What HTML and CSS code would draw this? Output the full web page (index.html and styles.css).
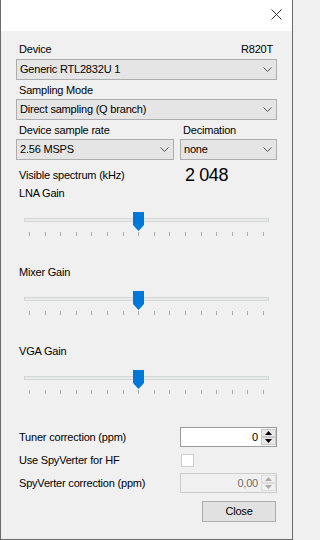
FILE: index.html
```html
<!DOCTYPE html>
<html>
<head>
<meta charset="utf-8">
<link rel="stylesheet" href="styles.css">
</head>
<body>
<div class="window">
  <div class="titlebar">
    <svg class="close-x" width="11" height="11" viewBox="0 0 11 11"><path d="M0.5 0.5 L10.5 10.5 M10.5 0.5 L0.5 10.5" stroke="#3a3a3a" stroke-width="1" fill="none"/></svg>
  </div>
  <div class="content">
    <div class="label-row first">
      <span class="lbl">Device</span>
      <span class="lbl tuner-name">R820T</span>
    </div>
    <div class="combo">
      <span class="combo-text">Generic RTL2832U 1</span>
      <svg class="chev" width="9" height="5" viewBox="0 0 9 5"><path d="M0.5 0.5 L4.5 4.5 L8.5 0.5" stroke="#505050" stroke-width="1" fill="none"/></svg>
    </div>
    <div class="lbl gap3">Sampling Mode</div>
    <div class="combo">
      <span class="combo-text">Direct sampling (Q branch)</span>
      <svg class="chev" width="9" height="5" viewBox="0 0 9 5"><path d="M0.5 0.5 L4.5 4.5 L8.5 0.5" stroke="#505050" stroke-width="1" fill="none"/></svg>
    </div>
    <div class="two-cols gap3">
      <div class="col-left">
        <div class="lbl">Device sample rate</div>
        <div class="combo">
          <span class="combo-text">2.56 MSPS</span>
          <svg class="chev" width="9" height="5" viewBox="0 0 9 5"><path d="M0.5 0.5 L4.5 4.5 L8.5 0.5" stroke="#505050" stroke-width="1" fill="none"/></svg>
        </div>
      </div>
      <div class="col-right">
        <div class="lbl">Decimation</div>
        <div class="combo">
          <span class="combo-text">none</span>
          <svg class="chev" width="9" height="5" viewBox="0 0 9 5"><path d="M0.5 0.5 L4.5 4.5 L8.5 0.5" stroke="#505050" stroke-width="1" fill="none"/></svg>
        </div>
      </div>
    </div>
    <div class="spectrum-row">
      <span class="lbl spectrum-label">Visible spectrum (kHz)</span>
      <span class="big-num">2 048</span>
    </div>

    <div class="gain-group first-gain">
      <div class="lbl">LNA Gain</div>
      <div class="slider">
        <div class="track"></div>
        <svg class="thumb" width="11" height="19" viewBox="0 0 11 19"><path d="M0 0 H11 V13 L5.5 19 L0 13 Z" fill="#0078d7"/></svg>
        <div class="ticks"><i></i><i></i><i></i><i></i><i></i><i></i><i></i><i></i><i></i><i></i><i></i><i></i><i></i><i></i><i></i><i></i></div>
      </div>
    </div>
    <div class="gain-group">
      <div class="lbl">Mixer Gain</div>
      <div class="slider">
        <div class="track"></div>
        <svg class="thumb" width="11" height="19" viewBox="0 0 11 19"><path d="M0 0 H11 V13 L5.5 19 L0 13 Z" fill="#0078d7"/></svg>
        <div class="ticks"><i></i><i></i><i></i><i></i><i></i><i></i><i></i><i></i><i></i><i></i><i></i><i></i><i></i><i></i><i></i><i></i></div>
      </div>
    </div>
    <div class="gain-group">
      <div class="lbl">VGA Gain</div>
      <div class="slider">
        <div class="track"></div>
        <svg class="thumb" width="11" height="19" viewBox="0 0 11 19"><path d="M0 0 H11 V13 L5.5 19 L0 13 Z" fill="#0078d7"/></svg>
        <div class="ticks"><i></i><i></i><i></i><i></i><i></i><i></i><i></i><i></i><i></i><i></i><i></i><i></i><i></i><i></i><i></i><i></i></div>
      </div>
    </div>

    <div class="form-row tuner-row">
      <span class="lbl">Tuner correction (ppm)</span>
      <div class="numeric">
        <span class="num-value">0</span>
        <div class="spin">
          <div class="spin-btn"><svg width="7" height="4" viewBox="0 0 7 4"><path d="M3.5 0 L7 4 L0 4 Z" fill="#000"/></svg></div>
          <div class="spin-btn"><svg width="7" height="4" viewBox="0 0 7 4"><path d="M0 0 L7 0 L3.5 4 Z" fill="#000"/></svg></div>
        </div>
      </div>
    </div>
    <div class="form-row check-row">
      <span class="lbl">Use SpyVerter for HF</span>
      <div class="check-cell"><span class="checkbox"></span></div>
    </div>
    <div class="form-row spy-row">
      <span class="lbl">SpyVerter correction (ppm)</span>
      <div class="numeric disabled">
        <span class="num-value">0,00</span>
        <div class="spin">
          <div class="spin-btn"><svg width="7" height="4" viewBox="0 0 7 4"><path d="M3.5 0 L7 4 L0 4 Z" fill="#a8a8a8"/></svg></div>
          <div class="spin-btn"><svg width="7" height="4" viewBox="0 0 7 4"><path d="M0 0 L7 0 L3.5 4 Z" fill="#a8a8a8"/></svg></div>
        </div>
      </div>
    </div>
    <div class="button-row">
      <div class="btn">Close</div>
    </div>
  </div>
</div>
</body>
</html>
```

FILE: styles.css
```css
html, body {
  margin: 0;
  padding: 0;
  background: #f0f0f0;
}
body {
  font-family: "Liberation Sans", Arial, sans-serif;
  font-size: 11px;
  letter-spacing: -0.2px;
  color: #000;
}
.window {
  width: 293px;
  height: 540px;
  box-sizing: border-box;
  border-left: 1px solid #6b6b6b;
  border-right: 1px solid #6b6b6b;
  border-bottom: 1px solid #6b6b6b;
  background: #f0f0f0;
  overflow: hidden;
}
.titlebar {
  height: 31px;
  background: #fff;
  display: flex;
  justify-content: flex-end;
  align-items: flex-start;
}
.close-x {
  display: block;
  margin-top: 9px;
  margin-right: 10px;
}
.content {
  padding: 0 15px;
}
.lbl {
  display: block;
  line-height: 15px;
  height: 15px;
  padding-left: 3px;
  white-space: nowrap;
}
.label-row {
  display: flex;
  justify-content: space-between;
}
.label-row.first {
  margin-top: 11px;
}
.tuner-name {
  padding-right: 4px;
}
.gap3 {
  margin-top: 3px;
}
.combo {
  margin-top: 1px;
  height: 21px;
  box-sizing: border-box;
  background: #e5e5e5;
  border: 1px solid #adadad;
  display: flex;
  align-items: center;
  justify-content: space-between;
  padding: 0 4px 0 3px;
}
.label-row + .combo {
  margin-top: 2px;
}
.combo-text {
  line-height: 15px;
  white-space: nowrap;
}
.chev {
  display: block;
}
.two-cols {
  display: flex;
  gap: 6px;
}
.col-left {
  width: 158px;
}
.col-right {
  flex: 1;
}
.spectrum-row {
  margin-top: 8px;
  height: 15px;
  display: flex;
}
.spectrum-label {
  width: 161px;
}
.big-num {
  font-size: 18px;
  line-height: 15px;
  letter-spacing: -0.4px;
  padding-left: 5px;
}
.gain-group {
  margin-top: 28px;
}
.gain-group.first-gain {
  margin-top: 3px;
}
.slider {
  position: relative;
  margin-top: 11px;
  margin-left: 8px;
  width: 245px;
  height: 25px;
}
.track {
  position: relative;
  top: 6px;
  height: 4px;
  box-sizing: border-box;
  background: #e7eaea;
  border: 1px solid #d6d6d6;
}
.thumb {
  position: absolute;
  left: 109px;
  top: 0;
  display: block;
}
.ticks {
  margin-top: 16px;
  padding: 0 5px;
  height: 4px;
  display: flex;
  justify-content: space-between;
}
.ticks i {
  display: block;
  width: 1px;
  height: 4px;
  background: #a9a9a9;
}
.form-row {
  display: flex;
  align-items: center;
  height: 20px;
}
.form-row .lbl {
  width: 161px;
}
.tuner-row {
  margin-top: 32px;
}
.check-row {
  margin-top: 3px;
}
.spy-row {
  margin-top: 3px;
}
.numeric {
  width: 97px;
  height: 20px;
  box-sizing: border-box;
  background: #fff;
  border: 1px solid #9a9a9a;
  display: flex;
  align-items: stretch;
}
.numeric.disabled {
  background: #f0f0f0;
  border-color: #cccccc;
  color: #6d6d6d;
}
.num-value {
  flex: 1;
  text-align: right;
  line-height: 18px;
  padding-right: 3px;
}
.spin {
  width: 15px;
  display: flex;
  flex-direction: column;
  margin: 1px 0;
}
.spin-btn {
  flex: 1;
  box-sizing: border-box;
  background: #e8e8e8;
  border: 1px solid #c9c9c9;
  display: flex;
  align-items: center;
  justify-content: center;
}
.numeric.disabled .spin-btn {
  background: #f0f0f0;
  border-color: #dcdcdc;
}
.check-cell {
  padding-left: 1px;
  display: flex;
}
.checkbox {
  display: block;
  width: 13px;
  height: 13px;
  box-sizing: border-box;
  background: #fff;
  border: 1px solid #cccccc;
}
.button-row {
  margin-top: 8px;
  display: flex;
  justify-content: flex-end;
  padding-right: 1px;
}
.btn {
  width: 74px;
  height: 21px;
  box-sizing: border-box;
  background: #e1e1e1;
  border: 1px solid #adadad;
  text-align: center;
  line-height: 19px;
}
```
